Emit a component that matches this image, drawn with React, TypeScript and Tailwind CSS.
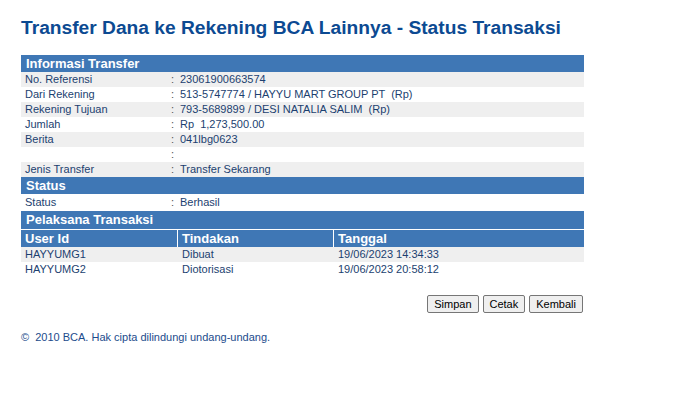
import React from "react";

const font = { fontFamily: '"Liberation Sans", Arial, sans-serif' };

function SectionHeader({ children, h = 17 }: { children: React.ReactNode; h?: number }) {
  return (
    <div
      className={`${h === 18 ? "h-[18px] leading-[18px]" : "h-[17px] leading-[17px]"} bg-[#3f77b5] pl-[5px] text-[13px] font-bold text-white`}
    >
      {children}
    </div>
  );
}

function InfoRow({ label, value, gray }: { label: string; value: string; gray?: boolean }) {
  return (
    <div className={`flex h-[15px] items-center text-[11px] leading-[15px] text-[#1c3f70] ${gray ? "bg-[#efefef]" : "bg-white"}`}>
      <div className="w-[150px] shrink-0 pl-[4px]">{label}</div>
      <div className="w-[9px] shrink-0 text-[#555]">:</div>
      <div className="whitespace-pre">{value}</div>
    </div>
  );
}

export default function App() {
  return (
    <div className="min-h-[415px] w-[681px] bg-white" style={font}>
      <div className="pl-[21px] pt-[17px]">
        <h1 className="text-[19.2px] font-bold leading-[22px] text-[#0c4a92]">
          Transfer Dana ke Rekening BCA Lainnya - Status Transaksi
        </h1>
        <div className="mt-[16px] w-[563px]">
          <SectionHeader>Informasi Transfer</SectionHeader>
          <InfoRow label="No. Referensi" value="23061900663574" gray />
          <InfoRow label="Dari Rekening" value="513-5747774 / HAYYU MART GROUP PT  (Rp)" />
          <InfoRow label="Rekening Tujuan" value="793-5689899 / DESI NATALIA SALIM  (Rp)" gray />
          <InfoRow label="Jumlah" value="Rp  1,273,500.00" />
          <InfoRow label="Berita" value="041lbg0623" gray />
          <InfoRow label="" value="" />
          <InfoRow label="Jenis Transfer" value="Transfer Sekarang" gray />
          <SectionHeader>Status</SectionHeader>
          <div className="pt-[1px]">
            <InfoRow label="Status" value="Berhasil" />
          </div>
          <div className="h-[1px]" />
          <SectionHeader h={18}>Pelaksana Transaksi</SectionHeader>
          <div className="mt-px grid grid-cols-[156px_155px_1fr] gap-x-px">
            <div className="h-[17px] bg-[#3f77b5] pl-[4px] text-[13px] font-bold leading-[17px] text-white">User Id</div>
            <div className="h-[17px] bg-[#3f77b5] pl-[4px] text-[13px] font-bold leading-[17px] text-white">Tindakan</div>
            <div className="h-[17px] bg-[#3f77b5] pl-[4px] text-[13px] font-bold leading-[17px] text-white">Tanggal</div>
          </div>
          <div className="grid h-[15px] grid-cols-[157px_156px_1fr] bg-[#efefef] text-[11px] leading-[15px] text-[#1c3f70]">
            <div className="pl-[4px]">HAYYUMG1</div>
            <div className="pl-[4px]">Dibuat</div>
            <div className="pl-[4px]">19/06/2023 14:34:33</div>
          </div>
          <div className="grid h-[15px] grid-cols-[157px_156px_1fr] bg-white text-[11px] leading-[15px] text-[#1c3f70]">
            <div className="pl-[4px]">HAYYUMG2</div>
            <div className="pl-[4px]">Diotorisasi</div>
            <div className="pl-[4px]">19/06/2023 20:58:12</div>
          </div>
          <div className="mt-[18px] flex justify-end gap-[4px] pr-px">
            {["Simpan", "Cetak", "Kembali"].map((b) => (
              <button
                key={b}
                className="h-[18px] rounded-[2px] border border-[#767676] bg-[#efefef] px-[6px] text-[11px] leading-[16px] text-black"
                style={font}
              >
                {b}
              </button>
            ))}
          </div>
          <div className="mt-[18px] text-[11px] leading-[13px] text-[#1c4b8c]">©&nbsp; 2010 BCA. Hak cipta dilindungi undang-undang.</div>
        </div>
      </div>
    </div>
  );
}
